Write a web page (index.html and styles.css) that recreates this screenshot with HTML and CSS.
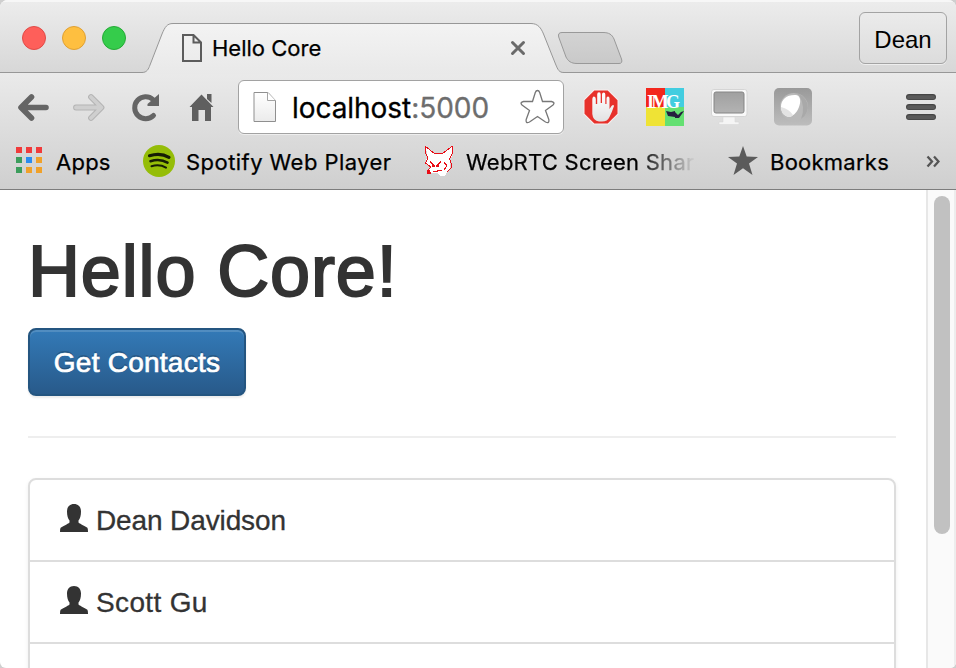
FILE: index.html
```html
<!DOCTYPE html>
<html lang="en">
<head>
<meta charset="utf-8">
<title>Hello Core</title>
<link rel="stylesheet" href="styles.css">
</head>
<body>
<div class="window">
  <header class="chrome">
    <div class="titlebar">
      <div class="lights"><span class="light red"></span><span class="light yellow"></span><span class="light green"></span></div>
      <div class="tab">
        <svg class="tab-shape" width="422" height="52" viewBox="142 22 422 52">
          <defs><linearGradient id="tg" x1="0" y1="0" x2="0" y2="1"><stop offset="0" stop-color="#f3f3f3"/><stop offset="1" stop-color="#e9e9e9"/></linearGradient></defs>
          <path d="M142 74V72.500C147 72.500 148.500 69 150 65L162 34C165 27 167 23.500 173 23.500H531C538 23.500 541 28 543.500 34L555.500 64C558 70 559 72.500 564 72.500V74Z" fill="url(#tg)"/>
          <path d="M142 72.500C147 72.500 148.500 69 150 65L162 34C165 27 167 23.500 173 23.500H531C538 23.500 541 28 543.500 34L555.500 64C558 70 559 72.500 564 72.500" fill="none" stroke="#979797"/>
        </svg>
        <svg class="tab-doc" width="22" height="30" viewBox="0 0 22 30"><path d="M2 2H12.500L20 9.500V28H2ZM12.500 2V9.500H20" fill="none" stroke="#5c5c5c" stroke-width="2"/></svg>
        <span class="tab-title">Hello Core</span>
        <svg class="tab-close" width="16" height="16" viewBox="0 0 16 16"><path d="M2.500 2.500L13.500 13.500M13.500 2.500L2.500 13.500" stroke="#6a6a6a" stroke-width="3" stroke-linecap="round"/></svg>
      </div>
      <svg class="newtab" width="68" height="36" viewBox="556 30 68 36">
        <defs><linearGradient id="ng" x1="0" y1="0" x2="0" y2="1"><stop offset="0" stop-color="#d3d3d3"/><stop offset="1" stop-color="#c9c9c9"/></linearGradient></defs>
        <path d="M562 32.500H603C609 32.500 612 34.500 614 39L621.500 59C622.500 62 621.500 63.500 619 63.500H577C571 63.500 568 61 566 57L558.700 37C558 34 559 32.500 562 32.500Z" fill="url(#ng)" stroke="#999"/>
      </svg>
      <div class="profile">Dean</div>
    </div>
    <div class="toolbar">
      <svg class="nav" width="238" height="56" viewBox="0 79 238 56">
        <g fill="none" stroke-linecap="round" stroke-linejoin="round">
          <path d="M46 107.500H22M31.500 97L21 107.500L31.500 118" stroke="#656565" stroke-width="5.600"/>
          <g><path d="M76 107.500H101M91 97L101.500 107.500L91 118" stroke="#b4b4b4" stroke-width="5.800"/><path d="M76 107.500H101M91 97L101.500 107.500L91 118" stroke="#cfcfcf" stroke-width="3.800"/></g>
          <path d="M153.500 115.500A11 11 0 1 1 153 99.500" stroke="#656565" stroke-width="5"/>
        </g>
        <path d="M159 94V106H147.500V104Z" fill="#656565"/>
        <path d="M201.500 94.500L213.500 107H211V121H205V110H198.500V121H192V107H189.500ZM207 94H211.500V103L207 99Z" fill="#5f5f5f"/>
      </svg>
      <div class="omnibox">
        <svg class="page" width="24" height="32" viewBox="0 0 24 32"><defs><linearGradient id="pg" x1="0" y1="0" x2="0" y2="1"><stop offset="0" stop-color="#fff"/><stop offset="1" stop-color="#ebebeb"/></linearGradient></defs><path d="M1 1.500H15L22.500 9.500V30.500H1Z" fill="url(#pg)" stroke="#8f8f8f"/><path d="M14.500 1.500V9.500H22.500" fill="#fff" stroke="#a3a3a3"/></svg>
        <span class="url">localhost<span class="port">:5000</span></span>
        <svg class="fav" width="36" height="36" viewBox="519 89 36 36"><path d="M537.500 90.500Q539 90.500 539.700 92.500L542.500 101.500L551.500 101.500Q555.500 102.500 553 105L545.500 110.500L548.800 119.500Q549.500 124 545.500 122L537.500 116.500L529.500 122Q525.500 124 526.200 119.500L529.500 110.500L522 105Q519.500 102.500 523.500 101.500L532.500 101.500L535.300 92.500Q536 90.500 537.500 90.500Z" fill="#fff" stroke="#777" stroke-width="1.300"/></svg>
      </div>
      <svg class="extensions" width="392" height="56" viewBox="564 79 392 56">
        <defs>
          <linearGradient id="mg" x1="0" y1="0" x2="0" y2="1"><stop offset="0" stop-color="#a0a0a0"/><stop offset="1" stop-color="#b3b3b3"/></linearGradient>
          <linearGradient id="bg" x1="0" y1="0" x2="0" y2="1"><stop offset="0" stop-color="#999"/><stop offset="1" stop-color="#bdbdbd"/></linearGradient>
          <linearGradient id="hg" x1="0" y1="0" x2="0" y2="1"><stop offset="0" stop-color="#fff"/><stop offset="1" stop-color="#e2e2e2"/></linearGradient>
        </defs>
        <path d="M593.700 89.500H608.300L618.500 99.700V114.300L608.300 124.500H593.700L583.500 114.300V99.700Z" fill="#f8eeee"/>
        <path d="M594.300 90.500H607.700L617.500 100.300V113.700L607.700 123.500H594.300L584.500 113.700V100.300Z" fill="#e7312b"/>
        <path d="M592.300 100Q592.300 96.500 594 96.500T595.800 99V104H597.200V94.500Q597.200 92.300 599 92.300T600.700 94.500V103H602V94.500Q602 92.500 603.700 92.500T605.300 94.500V104H606.500V98.500Q606.500 96.500 608 96.500T609.500 98.500V109L611.500 106Q613.500 104 614 106Q612 112 609.500 117Q607.500 121.500 602 121.500H599Q593 121 592.300 114Z" fill="url(#hg)"/>
        <path d="M646 88H665V107H646Z" fill="#f3271d"/><path d="M665 88H684V107H665Z" fill="#42cde0"/><path d="M646 107H665V126H646Z" fill="#efe335"/><path d="M665 107H684V126H665Z" fill="#64e072"/>
        <text class="img-label" x="647" y="108" textLength="33">IMG</text>
        <path d="M666 111L671 112L675 111V117L668 116ZM675 112L678 115L681 112L684 111L679 118H675Z" fill="#25203f"/>
        <rect x="711.500" y="89.500" width="35.500" height="27" rx="2.500" fill="#f9f9f9" stroke="#d5d5d5"/>
        <rect x="714" y="92" width="30" height="21" rx="2" fill="url(#mg)" stroke="#858585"/>
        <path d="M723 117H735V122H739V124.500H719V122H723Z" fill="#f5f5f5" stroke="#d8d8d8" stroke-width=".6"/>
        <rect x="774" y="88" width="38" height="37.500" rx="5" fill="url(#bg)"/>
        <circle cx="794" cy="107" r="14" fill="#b9b9b9"/><path d="M794 93A14 14 0 0 1 801 119Q806 107 799 95Z" fill="#a9a9a9"/>
        <path d="M781 107C781 99 787 94.500 796 95C801 96 801 102 799 107C796 115 790 118.500 786 116C783 114 781 111 781 107Z" fill="#fff"/><path d="M781 107Q789 109 793 115Q790 118.500 786 116Q781 114 781 107Z" fill="#e3e3e3"/>
        <path d="M909 97H933M909 107H933M909 117H933" stroke="#454545" stroke-width="6" stroke-linecap="round"/><path d="M909 97.300H933M909 107.300H933M909 117.300H933" stroke="#5a5a5a" stroke-width="4" stroke-linecap="round"/>
      </svg>
    </div>
    <nav class="bookmarks">
      <div class="bm apps">
        <svg width="26" height="26" viewBox="0 0 26 26"><path fill="#f03b3b" d="M0 0h6v6h-6zM10 0h6v6h-6zM20 0h6v6h-6z"/><path fill="#3c9d5c" d="M0 10h6v6h-6zM0 20h6v6h-6z"/><path fill="#2a8cf0" d="M10 10h6v6h-6z"/><path fill="#f0a12a" d="M20 10h6v6h-6zM10 20h6v6h-6zM20 20h6v6h-6z"/></svg>
        <span>Apps</span>
      </div>
      <div class="bm spotify">
        <svg width="32" height="32" viewBox="0 0 32 32"><circle cx="16" cy="16" r="16" fill="#95bd08"/><g fill="none" stroke="#161d05" stroke-linecap="round"><path d="M6.500 10.700Q17.500 7.200 26 12.300" stroke-width="3.200"/><path d="M7.500 16.200Q17 13.200 24.500 17.700" stroke-width="2.600"/><path d="M8.500 21.200Q16.500 18.900 23 22.600" stroke-width="2.100"/></g></svg>
        <span>Spotify Web Player</span>
      </div>
      <div class="bm webrtc">
        <svg width="30" height="32" viewBox="0 0 30 32" shape-rendering="crispEdges"><path d="M1.500 1.500L10.500 8.500H18.500L28 1.500V11L25.500 14.500L26.500 22L24 26L21 30.500H16L13 28H5L3.500 26L7 22L1.500 18L3.500 11Z" fill="#fff"/><path d="M6 27.500L3.500 26L7 22L1.500 18L4 13L1.500 8V1.500L10.500 8.500H18.500L28 1.500V9L25.500 14L27 18V23L23 27M20 17L23 21L20 25M9 27L18 25" fill="none" stroke="#e90d16" stroke-width="1"/><path d="M6 17L10 20M13 20L17 17M8 21H11M12 21H15" stroke="#e90d16" stroke-width="1.600"/><path d="M3 25H6L7 29H3Z" fill="#e90d16"/></svg>
        <span class="fade">WebRTC Screen Shar</span>
      </div>
      <div class="bm folder">
        <svg width="30" height="30" viewBox="0 0 30 30"><path d="M15 0L18.700 10.500L30 11L21 17.500L24.500 29L15 22.300L5.500 29L9 17.500L0 11L11.300 10.500Z" fill="#5b5b5b"/></svg>
        <span>Bookmarks</span>
      </div>
      <svg class="more" width="14" height="14" viewBox="0 0 14 14"><path d="M1.500 1.500L6 6.500L1.500 11.500M8 1.500L12.500 6.500L8 11.500" fill="none" stroke="#555" stroke-width="2.300"/></svg>
    </nav>
  </header>
  <div class="viewport">
    <main class="content">
      <h1>Hello Core!</h1>
      <button class="btn">Get Contacts</button>
      <hr>
      <ul class="list">
        <li><svg class="user" width="28" height="28" viewBox="0 0 28 28"><path d="M14 0C18.500 0 21 3 21 7.500C21 12 20 14.500 18.500 16.500V18.500C20 20 27 23 27.500 24Q28 25 28 28H0Q0 25 .5 24C1 23 8 20 9.500 18.500V16.500C8 14.500 7 12 7 7.500C7 3 9.500 0 14 0Z" fill="#333"/></svg><span class="long">Dean Davidson</span></li>
        <li><svg class="user" width="28" height="28" viewBox="0 0 28 28"><path d="M14 0C18.500 0 21 3 21 7.500C21 12 20 14.500 18.500 16.500V18.500C20 20 27 23 27.500 24Q28 25 28 28H0Q0 25 .5 24C1 23 8 20 9.500 18.500V16.500C8 14.500 7 12 7 7.500C7 3 9.500 0 14 0Z" fill="#333"/></svg><span class="short">Scott Gu</span></li>
        <li></li>
      </ul>
    </main>
    <div class="scrollbar"><div class="thumb"></div></div>
  </div>
</div>
</body>
</html>
```
FILE: styles.css
```css
* { box-sizing: border-box; }
html, body { margin: 0; height: 668px; overflow: hidden; background: #cfcfcf; }
svg { display: block; flex: none; }
.window { width: 956px; height: 668px; overflow: hidden; display: flex; flex-direction: column; background: #fff; border-radius: 8px 8px 6px 6px; font-family: Inter, sans-serif; color: #000; }
.chrome { flex: none; height: 190px; border-bottom: 1px solid #7d7d7d; background: linear-gradient(#eaeaea 73px, #cfcfcf); }
.titlebar { height: 73px; display: flex; align-items: flex-start; background: linear-gradient(#ececec, #d7d7d7); border-top: 2px solid #f7f7f7; box-shadow: inset 0 -1px #979797; }
.lights { display: flex; gap: 16px; padding: 24px 0 0 22px; width: 142px; }
.light { width: 24px; height: 24px; border-radius: 50%; border: 1px solid; }
.red { background: #fe5f5a; border-color: #e04b47; }
.yellow { background: #febf40; border-color: #dfa034; }
.green { background: #35cc4b; border-color: #25ab36; }
.tab { position: relative; width: 414px; height: 52px; margin-top: 20px; display: flex; align-items: flex-start; }
.tab-shape { position: absolute; left: 0; top: 0; }
.tab-doc { position: relative; margin: 11px 0 0 39px; }
.tab-title { position: relative; margin: 10px 0 0 9px; width: 297px; font-size: 22px; line-height: 32px; -webkit-text-stroke: .25px #000; white-space: nowrap; }
.tab-close { position: relative; margin-top: 18px; margin-left: 1px; }
.newtab { margin-top: 28px; }
.profile { margin: 10px 9px 0 auto; width: 88px; height: 52px; border: 1px solid #a3a3a3; border-radius: 6px; background: linear-gradient(#ebebeb, #dcdcdc); font: 24px/54px "Liberation Sans", sans-serif; text-align: center; box-shadow: 0 1px #eee; }
.toolbar { height: 61px; padding-top: 6px; display: flex; }
.omnibox { flex: none; width: 326px; height: 54px; margin-top: 1px; border: 1px solid #a2a2a2; border-radius: 6px; background: #fff; box-shadow: 0 1px #eee; display: flex; align-items: center; padding: 0 8px 0 14px; }
.url { margin-left: 15px; padding-top: 2px; font-size: 28px; line-height: 50px; letter-spacing: -.05px; -webkit-text-stroke: .3px; white-space: nowrap; flex: 1; }
.port { color: #6d6d6d; }
.img-label { font: bold 18px "Liberation Serif", serif; fill: #fff; }
.bookmarks { display: flex; height: 55px; align-items: center; padding-left: 16px; font-size: 22px; white-space: nowrap; -webkit-text-stroke: .25px #000; }
.bookmarks svg { -webkit-text-stroke: 0; }
.bm { display: flex; align-items: center; flex: none; height: 55px; }
.bm span { line-height: 53px; padding-top: 2px; letter-spacing: .25px; }
.apps { width: 127px; gap: 14px; }
.apps svg { margin-top: -3px; }
.spotify { width: 281px; gap: 11px; }
.spotify svg { margin-top: -1px; }
.bm.spotify span { letter-spacing: .45px; }
.webrtc { width: 304px; gap: 12px; }
.webrtc svg { margin-top: -2px; }
.folder { width: 198px; gap: 12px; }
.folder svg { margin-top: -2px; }
.fade { width: 230px; -webkit-mask-image: linear-gradient(90deg, #000 74%, transparent); mask-image: linear-gradient(90deg, #000 74%, transparent); }
.more { margin-top: 1px; }
.viewport { flex: 1; display: flex; min-height: 0; }
.content { width: 926px; padding: 40px 30px 0 28px; font-family: "Liberation Sans", sans-serif; color: #333; }
h1 { margin: 0; padding-top: 2px; height: 98px; font-size: 72px; line-height: 79px; font-weight: 400; letter-spacing: .85px; white-space: nowrap; -webkit-text-stroke: 2px #333; }
.btn { display: block; width: 218px; height: 68px; padding: 2px 0 0; border: 2px solid #245580; border-radius: 8px; background: linear-gradient(#337ab7, #285a8a); color: #fff; font: 28px/62px "Liberation Sans", sans-serif; letter-spacing: .25px; -webkit-text-stroke: .7px #fff; text-align: center; text-shadow: 0 -2px rgba(0,0,0,.2); box-shadow: inset 0 2px rgba(255,255,255,.15), 0 2px 2px rgba(0,0,0,.075); }
hr { margin: 40px 0; height: 2px; border: 0; background: #eee; }
.list { margin: 0; padding: 0; list-style: none; border: 2px solid #ddd; border-radius: 8px; box-shadow: 0 2px 4px rgba(0,0,0,.075); }
.list li { height: 82px; display: flex; align-items: center; padding-left: 30px; gap: 8px; border-bottom: 2px solid #ddd; font-size: 28px; -webkit-text-stroke: .3px #333; }
.user { margin-top: -4px; }
.list span { padding-top: 2px; }
.long { letter-spacing: -.12px; }
.short { letter-spacing: .35px; }
.scrollbar { width: 30px; border-left: 2px solid #e7e7e7; border-right: 2px solid #ededed; background: #fafafa; padding: 6px 0 0 6px; }
.thumb { width: 16px; height: 338px; border-radius: 8px; background: #c1c1c1; }
```
